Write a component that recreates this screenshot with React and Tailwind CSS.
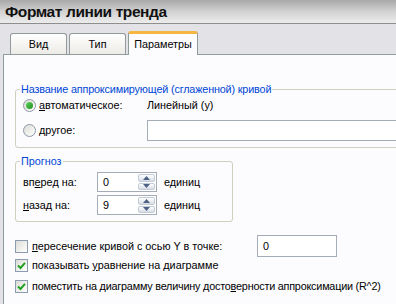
import React from "react"

const font = { fontFamily: '"Liberation Sans", Arial, sans-serif' }

// XP-like radio button
function Radio({ checked }) {
  return (
    <span className="w-[13px] h-[13px] rounded-full border border-[#8d99a8] bg-gradient-to-br from-[#dcdcd6] to-white flex items-center justify-center shrink-0">
      {checked && <span className="w-[7px] h-[7px] rounded-full bg-gradient-to-br from-[#5fd35f] to-[#1f8f1f]" />}
    </span>
  )
}

function Check({ checked }) {
  return (
    <span className="w-[13px] h-[13px] border border-[#8b9bb0] bg-gradient-to-br from-[#dcdcd6] to-white flex items-center justify-center shrink-0">
      {checked && (
        <svg width="9" height="9" viewBox="0 0 9 9">
          <path d="M1 4.5 L3.5 7 L8 1.8" fill="none" stroke="#21a121" strokeWidth="2" />
        </svg>
      )}
    </span>
  )
}

function Spinner({ value }) {
  return (
    <div className="w-[60px] h-[20px] border border-[#a5acb5] bg-white flex items-stretch">
      <span className="flex-1 pl-[5px] leading-[18px]">{value}</span>
      <div className="w-[18px] flex flex-col gap-[1px] py-[1px] pr-[1px]">
        {["M0 4 L3.5 0 L7 4 Z", "M0 0 L3.5 4 L7 0 Z"].map((d) => (
          <div key={d} className="flex-1 rounded-[2px] border border-[#c2ccd8] bg-gradient-to-b from-white to-[#d8dde6] flex items-center justify-center">
            <svg width="7" height="4" viewBox="0 0 7 4"><path d={d} fill="#4d6185" /></svg>
          </div>
        ))}
      </div>
    </div>
  )
}

function Tab({ label, active }) {
  if (active)
    return (
      <div className="w-[70px] h-[24px] bg-[#fcfcfe] border-x border-[#919b9c] border-t-[3px] border-t-[#f5b642] rounded-t-[3px] -mb-[1px] relative z-10 flex items-center justify-center">
        {label}
      </div>
    )
  return (
    <div className="w-[57px] h-[21px] bg-gradient-to-b from-white to-[#ecebe6] border border-[#919b9c] border-b-0 rounded-t-[3px] flex items-center justify-center">
      {label}
    </div>
  )
}

export default function App() {
  return (
    <div className="w-[396px] h-[304px] overflow-hidden flex flex-col bg-[#e3e2e6] text-[10.8px] text-black whitespace-nowrap" style={font}>
      <div className="h-[24px] shrink-0 bg-gradient-to-b from-[#a8a8a8] via-[#d2d2d2] to-[#ececec] border-b border-[#8e8e8e] pl-[5px] pt-[3px] text-[15.5px] tracking-[-0.4px] font-bold text-[#111] leading-[18px]">
        Формат линии тренда
      </div>
      <div className="h-[30px] shrink-0 flex items-end gap-[2px] pl-[10px]">
        <Tab label="Вид" />
        <Tab label="Тип" />
        <Tab label="Параметры" active />
      </div>
      <div className="flex-1 ml-[3px] border-l border-t border-[#919b9c] bg-[#fcfcfe] pl-[11px] pt-[28px] flex flex-col">
        <fieldset className="border border-[#d0d0bf] rounded-[3px] w-[400px] pl-[7px] pb-[6px]">
          <legend className="-ml-[3px] text-[#0046d5] px-[1px] leading-[13px] tracking-[-0.15px]">Название аппроксимирующей (сглаженной) кривой</legend>
          <div className="h-[18px] flex items-center">
            <Radio checked />
            <span className="ml-[3px] w-[108px]"><u>а</u>втоматическое:</span>
            <span>Линейный (у)</span>
          </div>
          <div className="h-[22px] mt-[5px] flex items-center">
            <Radio />
            <span className="ml-[3px] w-[108px]"><u>д</u>ругое:</span>
            <div className="flex-1 h-[21px] border border-[#a5acb5] bg-white" />
          </div>
        </fieldset>
        <fieldset className="mt-[7px] border border-[#d0d0bf] rounded-[3px] w-[218px] pl-[7px] pb-[6px]">
          <legend className="-ml-[3px] text-[#0046d5] px-[1px] leading-[13px]">Прогноз</legend>
          <div className="mt-[4px] flex items-center">
            <span className="w-[74px]">вп<u>е</u>ред на:</span>
            <Spinner value="0" />
            <span className="ml-[7px]">единиц</span>
          </div>
          <div className="mt-[3px] flex items-center">
            <span className="w-[74px]"><u>н</u>азад на:</span>
            <Spinner value="9" />
            <span className="ml-[7px]">единиц</span>
          </div>
        </fieldset>
        <div className="mt-[13px] h-[22px] flex items-center">
          <Check />
          <span className="ml-[4px] w-[225px]"><u>п</u>ересечение кривой с осью Y в точке:</span>
          <div className="w-[80px] h-[22px] border border-[#a5acb5] bg-white pl-[5px] leading-[20px]">0</div>
        </div>
        <div className="h-[16px] flex items-center">
          <Check checked />
          <span className="ml-[4px]">показывать <u>у</u>равнение на диаграмме</span>
        </div>
        <div className="mt-[5px] h-[16px] flex items-center">
          <Check checked />
          <span className="ml-[4px] tracking-[-0.2px]">поместить на диаграмму величину досто<u>в</u>ерности аппроксимации (R^2)</span>
        </div>
      </div>
    </div>
  )
}
